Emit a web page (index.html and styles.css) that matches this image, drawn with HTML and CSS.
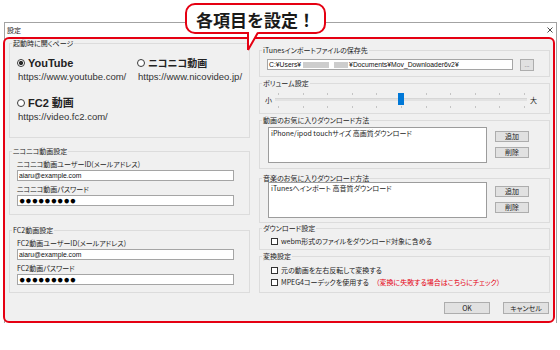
FILE: index.html
```html
<!DOCTYPE html>
<html lang="ja">
<head>
<meta charset="utf-8">
<title>設定</title>
<link rel="stylesheet" href="styles.css">
</head>
<body>
<div class="callout">各項目を設定！</div>
<svg class="callout-tail" width="14" height="21" viewBox="0 0 14 21"><polygon points="1,0 13,0 1,19" fill="#fff"/><path d="M2 1 V19 M12 1.5 L2 19" stroke="#e50012" stroke-width="2" fill="none"/></svg>

<div class="window">
  <div class="titlebar">
    <span class="title">設定</span>
    <svg class="close" width="6" height="6" viewBox="0 0 6 6"><path d="M0.5 0.5 L5.5 5.5 M5.5 0.5 L0.5 5.5" stroke="#333" stroke-width="0.9"/></svg>
  </div>
  <div class="client">
    <div class="cols">
      <div class="col col-left">
        <div class="group g-start">
          <span class="legend">起動時に開くページ</span>
          <div class="sites">
            <div class="site">
              <div class="radio-row"><span class="radio checked"></span><span class="site-name">YouTube</span></div>
              <div class="url">https://www.youtube.com/</div>
            </div>
            <div class="site">
              <div class="radio-row"><span class="radio"></span><span class="site-name jp">ニコニコ動画</span></div>
              <div class="url">https://www.nicovideo.jp/</div>
            </div>
            <div class="site">
              <div class="radio-row"><span class="radio"></span><span class="site-name">FC2 動画</span></div>
              <div class="url">https://video.fc2.com/</div>
            </div>
          </div>
        </div>

        <div class="group g-nico">
          <span class="legend">ニコニコ動画設定</span>
          <div class="fields">
            <div class="field">
              <div class="field-label">ニコニコ動画ユーザーID(メールアドレス)</div>
              <div class="input">aiaru@example.com</div>
            </div>
            <div class="field">
              <div class="field-label">ニコニコ動画パスワード</div>
              <div class="input pw">●●●●●●●●●</div>
            </div>
          </div>
        </div>

        <div class="group g-fc2">
          <span class="legend">FC2動画設定</span>
          <div class="fields">
            <div class="field">
              <div class="field-label">FC2動画ユーザーID(メールアドレス)</div>
              <div class="input">aiaru@example.com</div>
            </div>
            <div class="field">
              <div class="field-label">FC2動画パスワード</div>
              <div class="input pw">●●●●●●●●●</div>
            </div>
          </div>
        </div>
      </div>

      <div class="col col-right">
        <div class="group r-path">
          <span class="legend">iTunesインポートファイルの保存先</span>
          <div class="path-row">
            <div class="input path">C:¥Users¥<span class="blur b1"></span><span class="blur b2"></span>¥Documents¥Mov_Downloader6v2¥</div>
            <button class="btn browse">...</button>
          </div>
        </div>

        <div class="group r-volume">
          <span class="legend">ボリューム設定</span>
          <div class="volume">
            <span class="vol-label">小</span>
            <div class="slider">
              <div class="ticks"><i></i><i></i><i></i><i></i><i></i><i></i><i></i><i></i><i></i><i></i><i></i></div>
              <div class="track"></div>
              <div class="ticks bottom"><i></i><i></i><i></i><i></i><i></i><i></i><i></i><i></i><i></i><i></i><i></i></div>
              <span class="thumb"></span>
            </div>
            <span class="vol-label big">大</span>
          </div>
        </div>

        <div class="group r-video">
          <span class="legend">動画のお気に入りダウンロード方法</span>
          <div class="fav">
            <div class="listbox">iPhone/ipod touchサイズ 高画質ダウンロード</div>
            <div class="fav-btns">
              <button class="btn small">追加</button>
              <button class="btn small">削除</button>
            </div>
          </div>
        </div>

        <div class="group r-music">
          <span class="legend">音楽のお気に入りダウンロード方法</span>
          <div class="fav flush">
            <div class="listbox">iTunesへインポート 高音質ダウンロード</div>
            <div class="fav-btns">
              <button class="btn small">追加</button>
              <button class="btn small">削除</button>
            </div>
          </div>
        </div>

        <div class="group r-download">
          <span class="legend">ダウンロード設定</span>
          <div class="checks">
            <div class="check-row"><span class="checkbox"></span><span>webm形式のファイルをダウンロード対象に含める</span></div>
          </div>
        </div>

        <div class="group r-convert">
          <span class="legend">変換設定</span>
          <div class="checks loose">
            <div class="check-row"><span class="checkbox"></span><span>元の動画を左右反転して変換する</span></div>
            <div class="check-row"><span class="checkbox"></span><span>MPEG4コーデックを使用する</span><span class="note">（変換に失敗する場合はこちらにチェック）</span></div>
          </div>
        </div>
      </div>
    </div>

    <div class="actions">
      <button class="btn wide">OK</button>
      <button class="btn wide">キャンセル</button>
    </div>
  </div>
</div>
</body>
</html>
```

FILE: styles.css
```css
* { box-sizing: border-box; }
html, body { margin: 0; padding: 0; }
body {
  width: 560px;
  height: 350px;
  overflow: hidden;
  position: relative;
  background: #fff;
  font-family: "Noto Sans CJK JP", sans-serif;
  font-size: 7px;
  line-height: 8px;
  color: #1c1c1c;
  font-feature-settings: "palt";
}

/* callout */
.callout {
  position: absolute;
  left: 185px;
  top: 3px;
  width: 141px;
  height: 31px;
  z-index: 2;
  border: 2px solid #e50012;
  border-radius: 10px;
  background: #fff;
  padding-top: 2px;
  font-size: 17px;
  font-weight: 700;
  line-height: 26px;
  text-align: center;
  color: #1a1a1a;
  font-feature-settings: normal;
}
.callout-tail {
  position: absolute;
  left: 246px;
  top: 31px;
  z-index: 3;
}

/* window */
.window {
  margin: 22px 0 0 4px;
  width: 553px;
  border: 1px solid #a3a3a3;
  border-bottom: 0;
}
.titlebar {
  height: 14px;
  background: #fff;
  display: flex;
  align-items: center;
  justify-content: space-between;
  padding: 0 3px 0 2px;
}
.title { font-size: 7px; line-height: 8px; }
.close { display: block; }

.client {
  margin-left: -2px;
  width: 552px;
  height: 286px;
  border: 2px solid #e50012;
  border-radius: 6px;
  background: #f0f0f0;
  padding: 0 3px 0 4px;
}

.cols { display: flex; gap: 9px; }
.col-left { width: 241px; }
.col-right { width: 291px; }

/* group boxes */
.group {
  border: 1px solid #dcdcdc;
}
.legend {
  display: block;
  width: max-content;
  margin: -5px 0 0 2px;
  padding: 0 1px;
  background: #f0f0f0;
  line-height: 8px;
  white-space: nowrap;
}

.g-start { margin-top: 4px; height: 95px; }
.g-nico { margin-top: 13px; height: 64px; }
.g-fc2 { margin-top: 15px; height: 63px; }

.r-path { margin-top: 11px; height: 27px; }
.r-volume { margin-top: 6px; height: 31px; }
.r-video { margin-top: 6px; height: 49px; }
.r-music { margin-top: 9px; height: 45px; }
.r-download { margin-top: 5px; height: 22px; }
.r-convert { margin-top: 6px; height: 37px; }

/* start page */
.sites {
  display: grid;
  grid-template-columns: 120px auto;
  row-gap: 14px;
  padding: 10px 0 0 7px;
}
.radio-row {
  display: flex;
  align-items: center;
  gap: 3px;
  height: 12px;
}
.radio {
  width: 8px;
  height: 8px;
  border: 1px solid #3a3a3a;
  border-radius: 50%;
  background: #fff;
  flex: none;
}
.radio.checked {
  background: radial-gradient(circle, #2a2a2a 0 1.8px, #fff 2.4px);
}
.site-name {
  font-family: "Liberation Sans", "Noto Sans CJK JP", sans-serif;
  font-weight: 700;
  font-size: 11px;
  line-height: 12px;
  color: #222;
  white-space: nowrap;
}
.site-name.jp { font-family: "Noto Sans CJK JP", sans-serif; font-size: 10px; }
.url {
  font-family: "Liberation Sans", sans-serif;
  font-size: 9.5px;
  line-height: 13px;
  margin-top: 1px;
  padding-left: 1px;
  color: #333;
  white-space: nowrap;
}

/* account fields */
.fields { padding: 5px 0 0 7px; }
.field + .field { margin-top: 4px; }
.field-label { line-height: 8px; white-space: nowrap; }
.input {
  width: 217px;
  height: 11px;
  margin-top: 2px;
  border: 1px solid #a5a5a5;
  background: #fff;
  padding: 0 1px;
  font-family: "Liberation Sans", sans-serif;
  font-size: 6.8px;
  line-height: 9px;
  white-space: nowrap;
  overflow: hidden;
  color: #111;
}
.input.pw {
  font-size: 10.5px;
  line-height: 9px;
  color: #000;
}

/* path */
.path-row {
  display: flex;
  align-items: flex-start;
  gap: 7px;
  padding: 5px 0 0 7px;
}
.input.path { width: 246px; margin-top: 0; }
.blur {
  display: inline-block;
  height: 6px;
  vertical-align: -1px;
  background: #cdcdcd;
  filter: blur(0.7px);
}
.b1 { width: 26px; margin: 0 5px 0 2px; }
.b2 { width: 14px; margin-right: 1px; }

/* buttons */
.btn {
  display: block;
  margin: 0;
  padding: 0;
  background: #e1e1e1;
  border: 1px solid #adadad;
  border-radius: 0;
  font-family: "Noto Sans CJK JP", sans-serif;
  font-feature-settings: "palt";
  font-size: 7px;
  line-height: 9px;
  color: #222;
  text-align: center;
}
.browse { width: 14px; height: 12px; font-size: 6px; line-height: 8px; color: #777; }
.small { width: 34px; height: 11px; }
.wide { width: 46px; height: 12px; line-height: 10px; }

/* volume */
.volume {
  display: flex;
  align-items: center;
  padding: 5px 0 0 5px;
}
.vol-label { line-height: 8px; }
.slider {
  position: relative;
  width: 252px;
  height: 16px;
  margin-left: 3px;
  display: flex;
  flex-direction: column;
}
.vol-label.big { margin-left: 3px; }
.ticks {
  display: flex;
  justify-content: space-between;
  padding: 0 2px 0 3px;
  height: 2px;
  margin-top: 1px;
}
.ticks.bottom { margin-top: 5px; }
.ticks i { width: 1px; height: 2px; background: #c4c4c4; }
.track {
  height: 3px;
  margin-top: 3px;
  background: #e2e2e2;
  border-top: 1px solid #d6d6d6;
}
.thumb {
  position: absolute;
  left: 123px;
  top: 1px;
  width: 6px;
  height: 12px;
  background: #0078d7;
}

/* favourites */
.fav {
  display: flex;
  align-items: flex-start;
  gap: 8px;
  padding: 3px 0 0 8px;
}
.fav.flush { padding-top: 0; }
.listbox {
  width: 219px;
  height: 36px;
  border: 1px solid #9c9c9c;
  background: #fff;
  padding: 1px 2px;
  line-height: 8px;
  white-space: nowrap;
}
.fav-btns {
  display: flex;
  flex-direction: column;
  gap: 5px;
  margin-top: 4px;
}

/* checks */
.checks {
  display: flex;
  flex-direction: column;
  gap: 4px;
  padding: 5px 0 0 11px;
}
.checks.loose { padding-top: 6px; }
.check-row {
  display: flex;
  align-items: center;
  gap: 3px;
  height: 8px;
  white-space: nowrap;
}
.checkbox {
  width: 7px;
  height: 7px;
  border: 1px solid #333;
  background: #fff;
  flex: none;
}
.note { color: #e50012; margin-left: 4px; }

/* actions */
.actions {
  display: flex;
  justify-content: flex-end;
  gap: 13px;
  margin-top: 9px;
  padding-right: 1px;
}
```
